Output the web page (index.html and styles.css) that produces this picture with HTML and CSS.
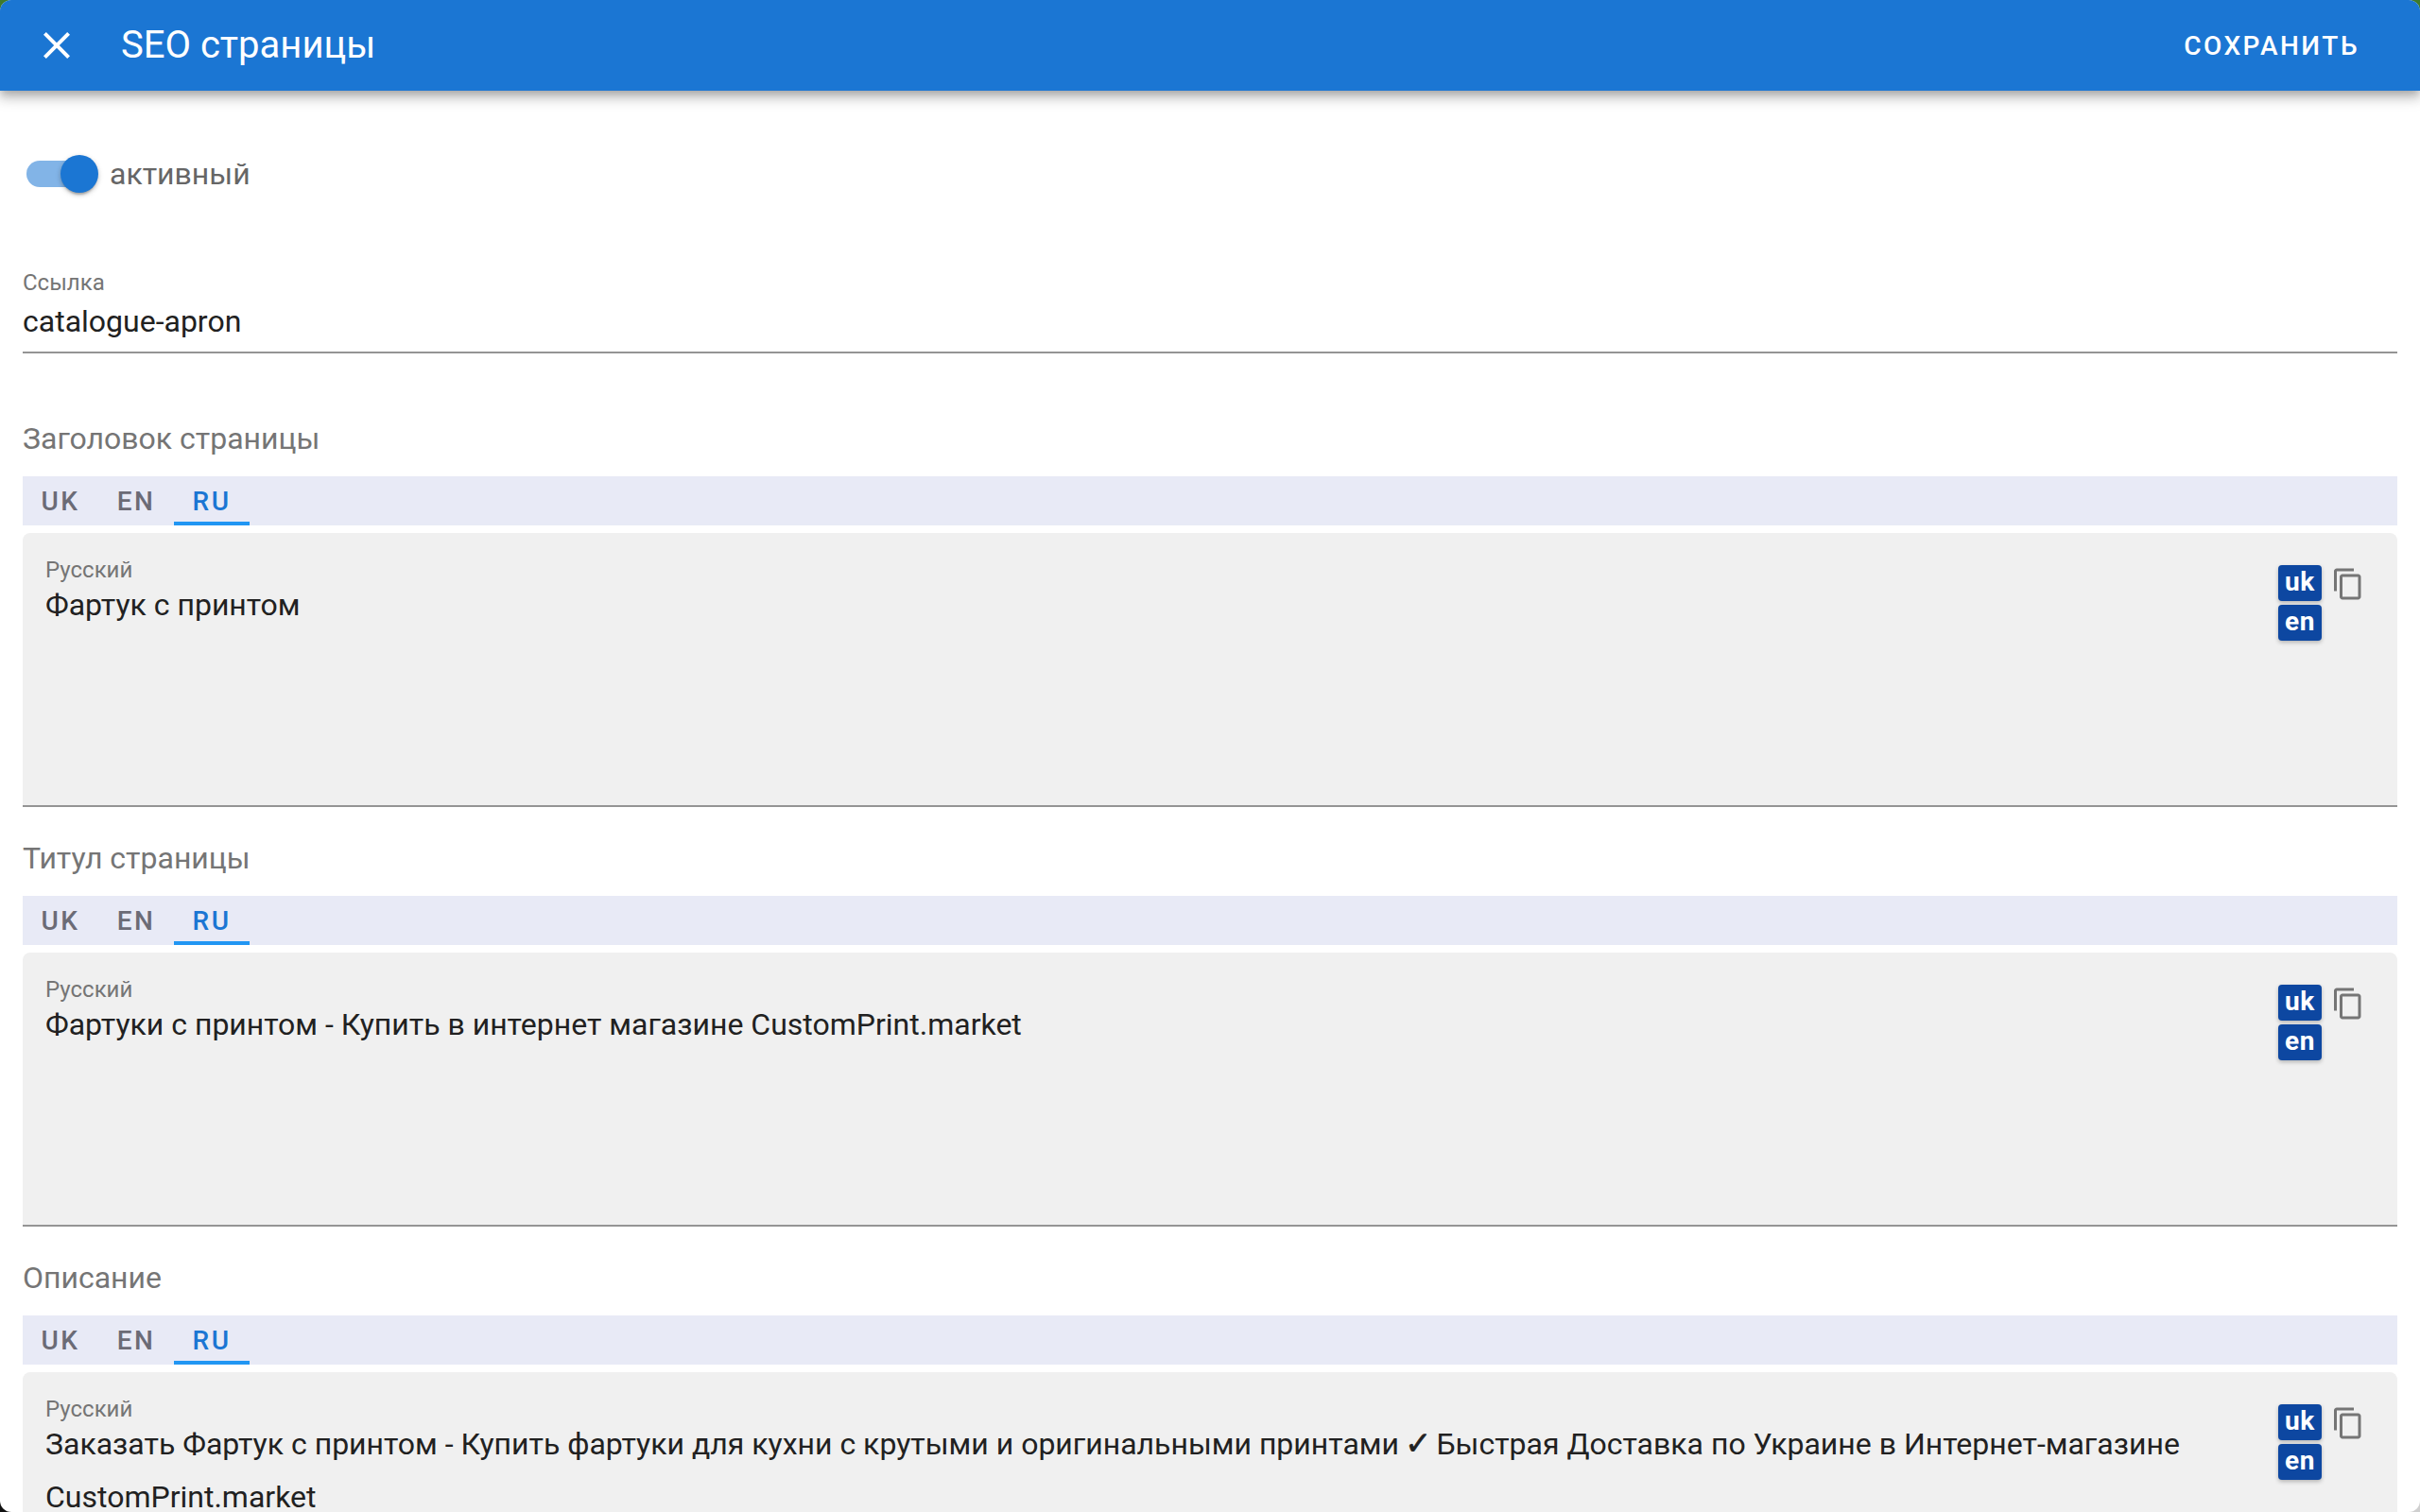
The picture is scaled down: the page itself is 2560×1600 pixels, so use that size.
FILE: index.html
```html
<!DOCTYPE html>
<html lang="ru">
<head>
<meta charset="utf-8">
<title>SEO страницы</title>
<link rel="stylesheet" href="styles.css">
</head>
<body>
<div class="window">
  <header class="appbar">
    <button class="close" aria-label="Закрыть">
      <svg viewBox="0 0 24 24" width="48" height="48"><path fill="#fff" d="M19 6.41 17.59 5 12 10.59 6.41 5 5 6.41 10.59 12 5 17.59 6.41 19 12 13.41 17.59 19 19 17.59 13.41 12z"/></svg>
    </button>
    <h1 class="title">SEO страницы</h1>
    <button class="save">Сохранить</button>
  </header>
  <main class="content">
    <div class="switch-row">
      <span class="switch"><span class="track"></span><span class="thumb"></span></span>
      <span class="switch-label">активный</span>
    </div>
    <div class="link-field">
      <div class="link-label">Ссылка</div>
      <div class="link-value">catalogue-apron</div>
    </div>

    <section class="group">
      <h2 class="group-title">Заголовок страницы</h2>
      <div class="tabs"><span class="tab">UK</span><span class="tab">EN</span><span class="tab active">RU</span></div>
      <div class="filled">
        <div class="text-col">
          <div class="filled-label">Русский</div>
          <div class="filled-value">Фартук с принтом</div>
        </div>
        <div class="actions">
          <div class="chips"><span class="chip">uk</span><span class="chip">en</span></div>
          <svg class="copy" viewBox="0 0 24 24" width="36" height="36"><path fill="#757575" d="M16 1H4c-1.1 0-2 .9-2 2v14h2V3h12V1zm3 4H8c-1.1 0-2 .9-2 2v14c0 1.1.9 2 2 2h11c1.1 0 2-.9 2-2V7c0-1.1-.9-2-2-2zm0 16H8V7h11v14z"/></svg>
        </div>
      </div>
    </section>

    <section class="group">
      <h2 class="group-title">Титул страницы</h2>
      <div class="tabs"><span class="tab">UK</span><span class="tab">EN</span><span class="tab active">RU</span></div>
      <div class="filled">
        <div class="text-col">
          <div class="filled-label">Русский</div>
          <div class="filled-value">Фартуки с принтом - Купить в интернет магазине CustomPrint.market</div>
        </div>
        <div class="actions">
          <div class="chips"><span class="chip">uk</span><span class="chip">en</span></div>
          <svg class="copy" viewBox="0 0 24 24" width="36" height="36"><path fill="#757575" d="M16 1H4c-1.1 0-2 .9-2 2v14h2V3h12V1zm3 4H8c-1.1 0-2 .9-2 2v14c0 1.1.9 2 2 2h11c1.1 0 2-.9 2-2V7c0-1.1-.9-2-2-2zm0 16H8V7h11v14z"/></svg>
        </div>
      </div>
    </section>

    <section class="group">
      <h2 class="group-title">Описание</h2>
      <div class="tabs"><span class="tab">UK</span><span class="tab">EN</span><span class="tab active">RU</span></div>
      <div class="filled">
        <div class="text-col">
          <div class="filled-label">Русский</div>
          <div class="filled-value">Заказать Фартук с принтом - Купить фартуки для кухни с крутыми и оригинальными принтами <span class="tick">✓</span> Быстрая Доставка по Украине в Интернет-магазине CustomPrint.market</div>
        </div>
        <div class="actions">
          <div class="chips"><span class="chip">uk</span><span class="chip">en</span></div>
          <svg class="copy" viewBox="0 0 24 24" width="36" height="36"><path fill="#757575" d="M16 1H4c-1.1 0-2 .9-2 2v14h2V3h12V1zm3 4H8c-1.1 0-2 .9-2 2v14c0 1.1.9 2 2 2h11c1.1 0 2-.9 2-2V7c0-1.1-.9-2-2-2zm0 16H8V7h11v14z"/></svg>
        </div>
      </div>
    </section>
  </main>
</div>
</body>
</html>
```
FILE: styles.css
```css
* { box-sizing: border-box; }
html, body { margin: 0; height: 100%; overflow: hidden; }
body {
  font-family: Roboto, "Noto Sans", sans-serif;
  background:
    linear-gradient(#3f7a2c, #3f7a2c) left top / 40px 40px no-repeat,
    linear-gradient(#3f7a2c, #3f7a2c) right top / 40px 40px no-repeat,
    linear-gradient(#111, #111) left bottom / 40px 40px no-repeat,
    #cfcfcf;
}
.window { width: 2560px; height: 1600px; background: #fff; border-radius: 12px; overflow: hidden; display: flex; flex-direction: column; }
.appbar { flex: none; height: 96px; background: #1b76d3; display: flex; align-items: center; padding: 0 64px 0 36px; position: relative; box-shadow: 0 4px 8px -2px rgba(0,0,0,.2), 0 8px 10px 1px rgba(0,0,0,.14), 0 2px 20px 2px rgba(0,0,0,.12); z-index: 2; }
.close { width: 48px; height: 48px; padding: 0; border: 0; background: none; display: flex; }
.title { margin: 0 0 0 44px; flex: 1; font-size: 40px; font-weight: 400; color: #fff; line-height: 48px; }
.save { padding: 0; border: 0; background: none; color: #fff; font: 500 28px/48px Roboto, sans-serif; letter-spacing: 2.5px; text-transform: uppercase; position: relative; top: 1px; }
.content { flex: 1; padding: 0 24px; min-height: 0; }
.switch-row { height: 64px; margin-top: 56px; display: flex; align-items: center; }
.switch { width: 80px; height: 40px; margin-left: 4px; position: relative; flex: none; }
.track { position: absolute; left: 0; top: 6px; width: 68px; height: 28px; border-radius: 14px; background: #1b76d3; opacity: .55; }
.thumb { position: absolute; left: 36px; top: 0; width: 40px; height: 40px; border-radius: 50%; background: #1b76d3; box-shadow: 0 4px 2px -2px rgba(0,0,0,.2), 0 2px 4px rgba(0,0,0,.14), 0 2px 6px rgba(0,0,0,.12); }
.switch-label { font-size: 32px; color: #666; margin-left: 8px; }
.link-field { margin-top: 69px; height: 89px; border-bottom: 2px solid #949494; }
.link-label { font-size: 24px; line-height: 28px; color: #757575; }
.link-value { font-size: 32px; line-height: 48px; color: #212121; margin-top: 3px; }
.group { height: 444px; padding-top: 28px; }
.group:first-of-type { margin-top: 36px; }
.group-title { margin: 0; font-size: 32px; font-weight: 400; line-height: 52px; color: #757575; height: 66px; }
.tabs { height: 52px; background: #e8eaf6; display: flex; }
.tab { width: 80px; display: flex; align-items: center; justify-content: center; font-size: 28px; font-weight: 500; letter-spacing: 2.5px; color: #6b6b76; }
.tab.active { color: #1b76d3; border-bottom: 4px solid #2196f3; padding-top: 4px; }
.filled { margin-top: 8px; height: 290px; background: #f0f0f0; border-radius: 8px 8px 0 0; border-bottom: 2px solid #949494; padding: 25px 0 0 24px; display: flex; }
.group:last-of-type .filled { height: 400px; }
.text-col { flex: 1; min-width: 0; }
.filled-label { font-size: 24px; line-height: 28px; color: #757575; margin-bottom: -5px; }
.filled-value { font-size: 32px; line-height: 56px; color: #212121; padding-right: 60px; }
.tick { font-family: "DejaVu Sans", sans-serif; font-size: 34px; line-height: 1; font-weight: 700; letter-spacing: -3px; margin-left: -2px; -webkit-text-stroke: .6px #212121; }
.actions { display: flex; flex: none; width: 126px; padding-top: 9px; }
.chips { width: 46px; display: flex; flex-direction: column; gap: 4px; }
.chip { height: 38px; padding-bottom: 4px; background: #0d47a1; border-radius: 4px; color: #fff; font-size: 28px; font-weight: 700; letter-spacing: .6px; display: flex; align-items: center; justify-content: center; box-shadow: 0 2px 4px rgba(0,0,0,.25); }
.copy { margin-left: 10px; margin-top: 2px; }
```
